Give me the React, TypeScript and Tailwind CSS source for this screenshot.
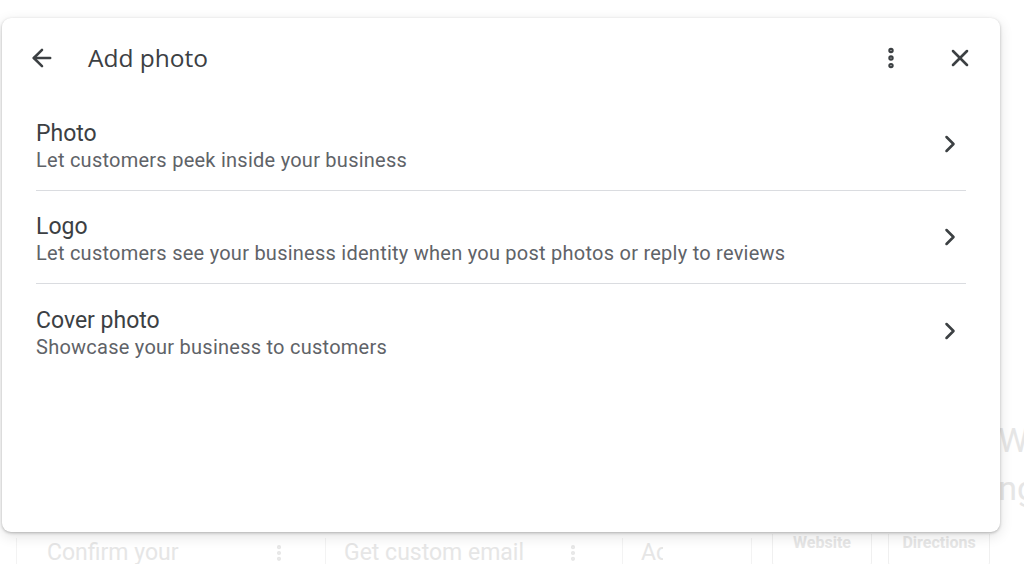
import { ArrowLeft, X, EllipsisVertical, ChevronRight } from "lucide-react";

const options = [
  { title: "Photo", desc: "Let customers peek inside your business" },
  { title: "Logo", desc: "Let customers see your business identity when you post photos or reply to reviews" },
  { title: "Cover photo", desc: "Showcase your business to customers" },
];

function Backdrop() {
  return (
    <div className="flex h-full flex-col text-[#e6e6e6]">
      <div className="flex flex-1 justify-end">
        <div className="mt-[416px] flex flex-col text-[34px] leading-[48px]" style={{ marginRight: -12 }}>
          <span>W</span>
          <span>ng</span>
        </div>
      </div>
      <div className="flex h-[30px] items-start pt-[4px] pl-[16px]">
        <div className="flex h-[30px] w-[292px] items-center justify-between border-l border-[#f3f3f3] pl-[30px] pr-[19px] text-[23px]">
          <span>Confirm your</span>
          <EllipsisVertical size={20} strokeWidth={3} />
        </div>
        <div className="ml-[17px] flex h-[30px] w-[280px] items-center justify-between border-l border-[#f3f3f3] pl-[18px] pr-[22px] text-[23px]">
          <span>Get custom email</span>
          <EllipsisVertical size={20} strokeWidth={3} />
        </div>
        <div className="ml-[17px] flex h-[30px] w-[130px] items-center border-l border-r border-[#f3f3f3] pl-[18px] text-[23px]">
          <span className="w-[22px] overflow-hidden whitespace-nowrap">Acc</span>
        </div>
        <div className="ml-[20px] -mt-[4px] flex h-[32px] gap-[16px]">
          <div className="flex w-[100px] items-start justify-center rounded-b border border-t-0 border-[#f0f0f0] pt-[0px] text-[16px] leading-[18px] font-bold">Website</div>
          <div className="flex w-[102px] items-start justify-center rounded-b border border-t-0 border-[#f0f0f0] text-[16px] leading-[18px] font-bold">Directions</div>
        </div>
      </div>
    </div>
  );
}

export default function App() {
  return (
    <div className="relative h-[564px] w-[1024px] overflow-hidden bg-white" style={{ fontFamily: "Roboto, 'Liberation Sans', sans-serif" }}>
      <Backdrop />
      <div className="absolute left-[2px] top-[18px] flex h-[514px] w-[998px] flex-col rounded-[9px] bg-white shadow-[0_1px_3px_rgba(0,0,0,0.25),0_4px_14px_rgba(0,0,0,0.12)]">
        <div className="flex h-[80px] items-center pl-[26px] pr-[26px] text-[#3c4043]">
          <ArrowLeft size={28} strokeWidth={2.2} />
          <span className="ml-[32px] text-[24.5px]" style={{ fontFamily: "'Open Sans', Roboto, sans-serif" }}>Add photo</span>
          <div className="ml-auto flex items-center">
            <EllipsisVertical size={26} strokeWidth={3} />
            <X size={28} strokeWidth={2.2} className="ml-[42px]" />
          </div>
        </div>
        <div className="flex flex-col px-[34px]">
          {options.map((o, i) => (
            <div
              key={o.title}
              className={`flex h-[93px] items-center justify-between ${i < options.length - 1 ? "border-b border-[#dadce0]" : ""}`}
            >
              <div className="mt-[6px] flex flex-col">
                <span className="text-[23px] leading-[27px] text-[#3c4043]">{o.title}</span>
                <span className="text-[20px] leading-[27px] tracking-[0.25px] text-[#5f6368]">{o.desc}</span>
              </div>
              <ChevronRight size={28} strokeWidth={2.2} className="mr-[2px] text-[#3c4043]" />
            </div>
          ))}
        </div>
      </div>
    </div>
  );
}
